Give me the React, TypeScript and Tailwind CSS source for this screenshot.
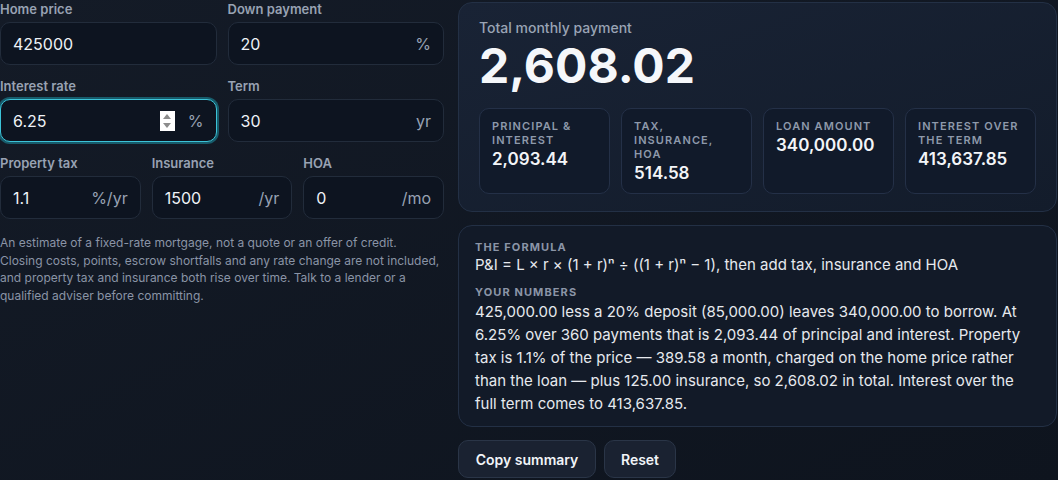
import React from "react";

function Field({
  label,
  value,
  suffix,
  focused,
}: {
  label: string;
  value: string;
  suffix?: string;
  focused?: boolean;
}) {
  return (
    <div className="flex flex-col">
      <span className="text-[13px] leading-[18px] font-semibold text-[#98a2b3]">{label}</span>
      <div
        className={
          focused
            ? "mt-[4px] flex h-[43px] items-center rounded-[10px] border border-[#3cc3d8] bg-[#0d1420] pl-[12px] pr-[12px] ring-2 ring-[#1b8799]/60"
            : "mt-[4px] flex h-[43px] items-center rounded-[10px] border border-[#222c3b] bg-[#0d1420] pl-[12px] pr-[12px]"
        }
      >
        <span className="flex-1 text-[16px] leading-[20px] text-[#eef2f7]">{value}</span>
        {focused && (
          <span className="mr-[13px] flex h-[20px] w-[15px] flex-col items-center justify-center gap-[4px] bg-white">
            <svg width="8" height="5" viewBox="0 0 8 5">
              <path d="M4 0L8 5H0z" fill="#8c8c8c" />
            </svg>
            <svg width="8" height="5" viewBox="0 0 8 5">
              <path d="M0 0H8L4 5z" fill="#8c8c8c" />
            </svg>
          </span>
        )}
        {suffix && <span className="text-[16px] leading-[20px] text-[#98a2b3]">{suffix}</span>}
      </div>
    </div>
  );
}

function Stat({ label, value }: { label: string; value: string }) {
  return (
    <div className="rounded-[10px] border border-[#243047] bg-[#111a2a] px-3 pt-[10px] pb-[8px]">
      <div className="text-[11px] leading-[14px] font-semibold uppercase tracking-[0.1em] text-[#8e99ab]">
        {label}
      </div>
      <div className="text-[17px] leading-[24px] font-semibold text-[#f3f5f8]">{value}</div>
    </div>
  );
}

export default function App() {
  return (
    <div className="h-[480px] w-full overflow-hidden bg-gradient-to-br from-[#141b27] to-[#0e141e] font-[Inter,sans-serif] text-white">
      <div className="flex w-[1057px] gap-[14px]">
        <div className="w-[444px] shrink-0">
          <div className="grid grid-cols-2 gap-x-[11px] gap-y-[12px]">
            <Field label="Home price" value="425000" />
            <Field label="Down payment" value="20" suffix="%" />
            <Field label="Interest rate" value="6.25" suffix="%" focused />
            <Field label="Term" value="30" suffix="yr" />
          </div>
          <div className="mt-[12px] grid grid-cols-3 gap-x-[11px]">
            <Field label="Property tax" value="1.1" suffix="%/yr" />
            <Field label="Insurance" value="1500" suffix="/yr" />
            <Field label="HOA" value="0" suffix="/mo" />
          </div>
          <p className="mt-[15px] w-[440px] text-[12px] leading-[17.5px] text-[#8a94a6]">
            An estimate of a fixed-rate mortgage, not a quote or an offer of credit. Closing costs, points,
            escrow shortfalls and any rate change are not included, and property tax and insurance both rise
            over time. Talk to a lender or a qualified adviser before committing.
          </p>
        </div>

        <div className="flex w-[599px] shrink-0 flex-col gap-[13px] pt-[2px]">
          <div className="rounded-[14px] border border-[#233045] bg-gradient-to-br from-[#192335] to-[#131c2b] px-5 pt-[15px] pb-[17px]">
            <div className="text-[14px] leading-[20px] font-medium text-[#9aa4b5]">Total monthly payment</div>
            <div className="mt-[4px] text-[48px] leading-[48px] font-bold text-[#f5f7fa]">2,608.02</div>
            <div className="mt-[18px] grid grid-cols-4 gap-[11px]">
              <Stat label="Principal & interest" value="2,093.44" />
              <Stat label="Tax, insurance, HOA" value="514.58" />
              <Stat label="Loan amount" value="340,000.00" />
              <Stat label="Interest over the term" value="413,637.85" />
            </div>
          </div>

          <div className="rounded-[14px] border border-[#233045] bg-[#121a28] px-4 pt-[13px] pb-[11px]">
            <div className="text-[11px] leading-[16px] font-bold uppercase tracking-[0.1em] text-[#8b95a7]">
              The formula
            </div>
            <div className="text-[15px] leading-[20px] text-[#e6e9ee]">
              P&amp;I = L × r × (1 + r)ⁿ ÷ ((1 + r)ⁿ − 1), then add tax, insurance and HOA
            </div>
            <div className="mt-[9px] text-[11px] leading-[16px] font-bold uppercase tracking-[0.1em] text-[#8b95a7]">
              Your numbers
            </div>
            <p className="w-[552px] text-[15px] leading-[23px] text-[#e6e9ee]">
              425,000.00 less a 20% deposit (85,000.00) leaves 340,000.00 to borrow. At 6.25% over 360 payments
              that is 2,093.44 of principal and interest. Property tax is 1.1% of the price — 389.58 a month,
              charged on the home price rather than the loan — plus 125.00 insurance, so 2,608.02 in total.
              Interest over the full term comes to 413,637.85.
            </p>
          </div>

          <div className="flex gap-[8px]">
            <button className="h-[38px] w-[138px] rounded-[10px] border border-[#2a3547] bg-[#1a2231] text-[14px] font-semibold text-[#f1f4f8]">
              Copy summary
            </button>
            <button className="h-[38px] w-[72px] rounded-[10px] border border-[#2a3547] bg-[#1a2231] text-[14px] font-semibold text-[#f1f4f8]">
              Reset
            </button>
          </div>
        </div>
      </div>
    </div>
  );
}
